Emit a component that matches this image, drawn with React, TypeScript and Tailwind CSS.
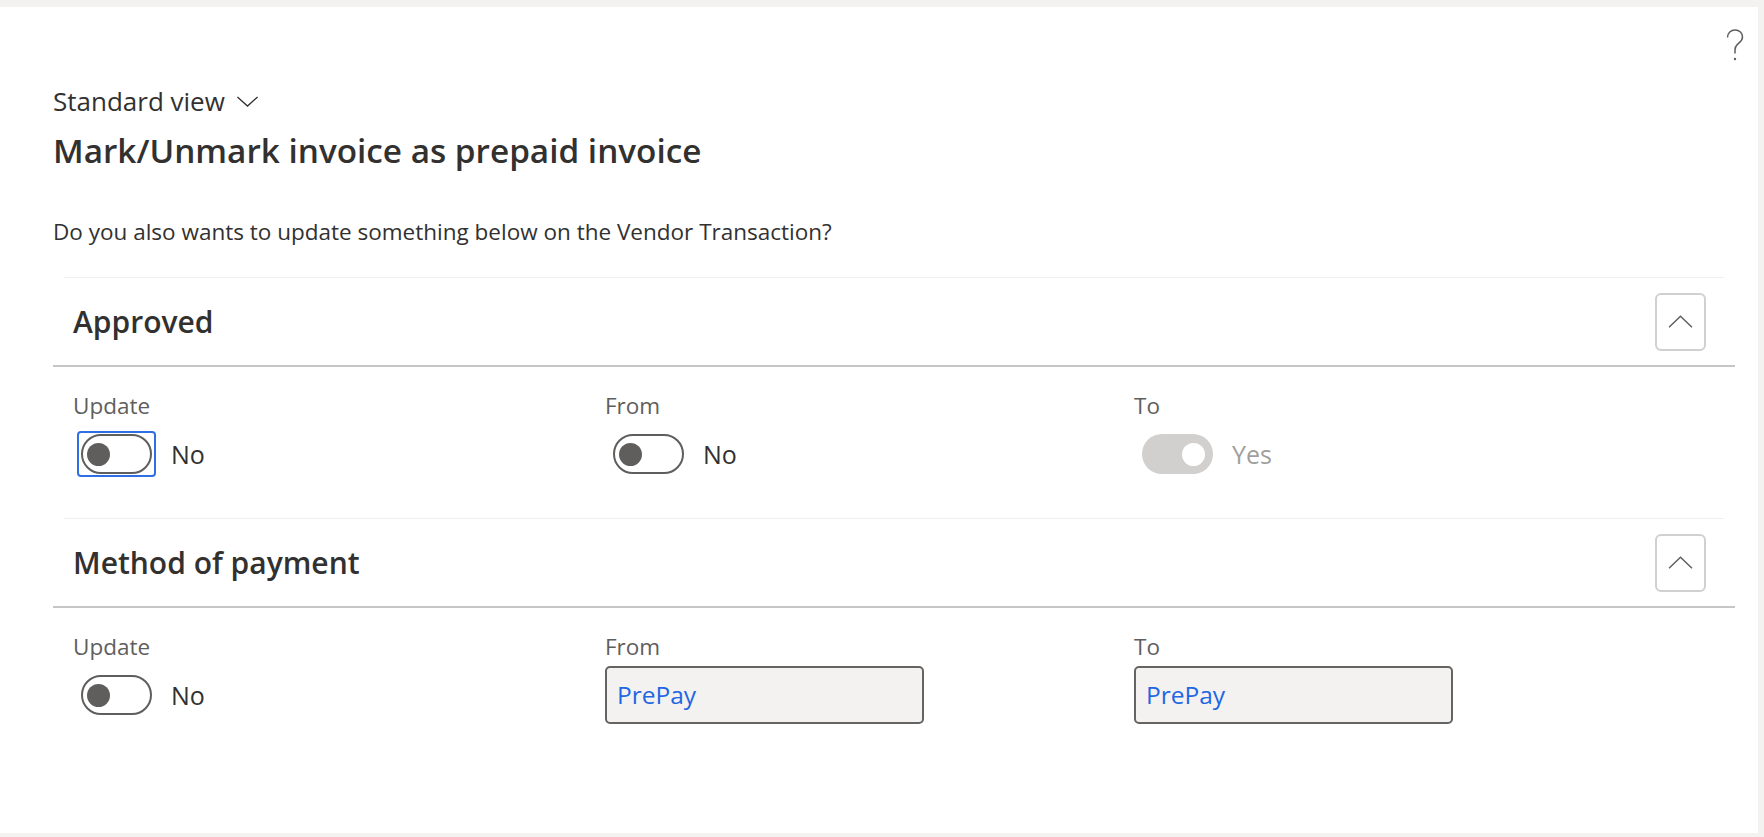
import React from 'react'

const font = { fontFamily: '"Open Sans", "Noto Sans", Arial, sans-serif' }

function Chevron({ up = false, className = '' }: { up?: boolean; className?: string }) {
  return (
    <svg viewBox="0 0 24 12" className={className} fill="none" stroke="currentColor" strokeWidth={1.4}>
      {up ? <path d="M1 11.5 L12 1 L23 11.5" /> : <path d="M1 1 L12 11 L23 1" />}
    </svg>
  )
}

function HelpIcon() {
  return (
    <svg viewBox="0 0 18 32" className="h-[32px] w-[18px] text-[#605e5c]" fill="none" stroke="currentColor" strokeWidth={1.5}>
      <path d="M1.5 8.5 C1.5 4 5 1 9 1 C13.5 1 16.5 4 16.5 8 C16.5 12 13.5 13.5 11.2 15.6 C9.6 17.1 9 18.5 9 21 V24.5" />
      <circle cx="9" cy="30" r="1.2" fill="currentColor" stroke="none" />
    </svg>
  )
}

function Toggle({ on = false, disabled = false, focused = false }: { on?: boolean; disabled?: boolean; focused?: boolean }) {
  return (
    <div
      className={`ml-[4px] flex h-[46px] w-[79px] items-center justify-center rounded-[4px] border-2 ${
        focused ? 'border-[#2f6fe4]' : 'border-transparent'
      }`}
    >
      {disabled ? (
        <div className="flex h-[40px] w-[71px] items-center justify-end rounded-full bg-[#d2d0ce] pr-[8px]">
          <div className="h-[23px] w-[23px] rounded-full bg-white" />
        </div>
      ) : (
        <div
          className={`flex h-[40px] w-[71px] items-center rounded-full border-2 border-[#605e5c] px-[4px] ${
            on ? 'justify-end' : 'justify-start'
          }`}
        >
          <div className="h-[23px] w-[23px] rounded-full bg-[#605e5c]" />
        </div>
      )}
    </div>
  )
}

function ToggleField({ label, value, disabled, focused }: { label: string; value: string; disabled?: boolean; focused?: boolean }) {
  return (
    <div className="flex flex-col">
      <div className="h-[28px] text-[22.5px] leading-[28px] text-[#605e5c]">{label}</div>
      <div className="mt-[5px] flex h-[58px] items-center">
        <Toggle on={disabled} disabled={disabled} focused={focused} />
        <span className={`ml-[15px] text-[25px] leading-[30px] ${disabled ? 'text-[#a19f9d]' : 'text-[#323130]'}`}>
          {value}
        </span>
      </div>
    </div>
  )
}

function InputField({ label, value }: { label: string; value: string }) {
  return (
    <div className="flex flex-col">
      <div className="h-[28px] text-[22.5px] leading-[28px] text-[#605e5c]">{label}</div>
      <div className="mt-[5px] flex h-[58px] w-[319px] items-center rounded-[5px] border-2 border-[#656463] bg-[#f3f2f1] pl-[10px]">
        <span className="text-[24.5px] leading-[30px] text-[#2266e3]">{value}</span>
      </div>
    </div>
  )
}

function Section({ title, children }: { title: string; children: React.ReactNode }) {
  return (
    <div>
      <div className="mx-[11px] h-px bg-[#f0efee]" />
      <div className="flex h-[87px] items-center justify-between pl-[20px] pr-[29px]">
        <h2 className="text-[30px] font-semibold leading-[40px] text-[#323130]">{title}</h2>
        <button className="flex h-[58px] w-[51px] items-center justify-center rounded-[6px] border-2 border-[#d2d0ce] text-[#605e5c]">
          <Chevron up className="h-[13px] w-[25px]" />
        </button>
      </div>
      <div className="h-[2px] bg-[#c8c6c4]" />
      <div className="grid grid-cols-[532px_529px_1fr] pl-[20px] pt-[25px]">{children}</div>
    </div>
  )
}

export default function App() {
  return (
    <div className="h-[837px] w-full overflow-hidden bg-[#f3f2f1] pt-[7px]" style={font}>
      <div className="mr-[6px] h-[826px] bg-white">
        <div className="flex justify-end pr-[14px] pt-[22px]">
          <HelpIcon />
        </div>

        <div className="pl-[53px] pr-[23px]">
          <div className="mt-[23px] flex h-[34px] items-center text-[#323130]">
            <span className="text-[26px] leading-[34px]">Standard view</span>
            <Chevron className="ml-[11px] mt-[1px] h-[11px] w-[23px]" />
          </div>
          <h1 className="mt-[10px] text-[33.3px] font-semibold leading-[44px] text-[#323130]">
            Mark/Unmark invoice as prepaid invoice
          </h1>
          <p className="mt-[45px] text-[22.5px] leading-[30px] text-[#323130]">
            Do you also wants to update something below on the Vendor Transaction?
          </p>

          <div className="mt-[30px]">
            <Section title="Approved">
              <ToggleField label="Update" value="No" focused />
              <ToggleField label="From" value="No" />
              <ToggleField label="To" value="Yes" disabled />
            </Section>
            <div className="h-[35px]" />
            <Section title="Method of payment">
              <ToggleField label="Update" value="No" />
              <InputField label="From" value="PrePay" />
              <InputField label="To" value="PrePay" />
            </Section>
          </div>
        </div>
      </div>
    </div>
  )
}
